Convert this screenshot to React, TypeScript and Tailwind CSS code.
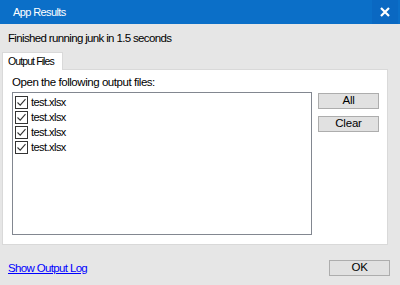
import React from "react";

const files = ["test.xlsx", "test.xlsx", "test.xlsx", "test.xlsx"];

function Check() {
  return (
    <span className="flex h-[13px] w-[13px] shrink-0 items-center justify-center border border-[#333] bg-white">
      <svg width="11" height="11" viewBox="0 0 11 11">
        <path d="M1.5 5.5 L4.2 8.2 L9.5 2.2" fill="none" stroke="#333" strokeWidth="1.1" />
      </svg>
    </span>
  );
}

function WinButton({ label, className = "" }: { label: string; className?: string }) {
  return (
    <button
      className={`flex h-[16px] w-[61px] items-center justify-center border border-[#adadad] bg-[#e1e1e1] text-[11.5px] leading-none tracking-[-0.2px] text-black ${className}`}
    >
      {label}
    </button>
  );
}

export default function App() {
  return (
    <div
      className="flex h-[285px] w-[400px] flex-col bg-[#e6e6e6] text-[11px] tracking-[-0.3px] text-black"
      style={{ fontFamily: '"Liberation Sans", Arial, sans-serif' }}
    >
      {/* title bar */}
      <div className="flex h-[24px] shrink-0 items-center bg-[#0b6fc8] pr-[2px] text-white">
        <span className="pl-[13px] text-[11px] tracking-[-0.6px]">App Results</span>
        <span className="ml-auto flex h-full w-[26px] items-center justify-center bg-[#0a68c2]">
          <svg width="10" height="10" viewBox="0 0 10 10">
            <path d="M1 1 L9 9 M9 1 L1 9" stroke="white" strokeWidth="2.2" />
          </svg>
        </span>
      </div>

      <div className="flex flex-1 flex-col px-[2px] pr-[12px]">
        <div className="mt-[6px] pl-[6px] text-[11.5px] leading-[16px] tracking-[-0.65px]">
          Finished running junk in 1.5 seconds
        </div>

        {/* tab strip */}
        <div className="mt-[6px] flex">
          <div className="relative z-10 -mb-px h-[18px] w-[61px] whitespace-nowrap border border-b-0 border-[#d9d9d9] bg-white pl-[5px] text-[10.5px] leading-[17px] tracking-[-0.9px]">
            Output Files
          </div>
        </div>

        {/* tab panel */}
        <div className="flex h-[176px] flex-col border border-[#d9d9d9] bg-white pl-[9px] pt-[4px] pb-[9px]">
          <div className="text-[11.5px] leading-[16px] tracking-[-0.45px]">Open the following output files:</div>
          <div className="mt-[2px] flex flex-1 gap-[6px]">
            <div className="flex w-[300px] flex-col border border-[#828790] pt-[2px] pl-px">
              {files.map((f, i) => (
                <div key={i} className="flex h-[15px] items-center gap-[3px] pl-px">
                  <Check />
                  <span className="text-[11px] leading-[15px] tracking-[-0.55px]">{f}</span>
                </div>
              ))}
            </div>
            <div className="flex flex-col gap-[7px] pt-px">
              <WinButton label="All" />
              <WinButton label="Clear" />
            </div>
          </div>
        </div>

        {/* footer */}
        <div className="mt-[15px] flex items-center">
          <a className="pl-[6px] text-[11.5px] leading-[16px] tracking-[-0.65px] text-[#0000ff] underline">
            Show Output Log
          </a>
          <WinButton label="OK" className="ml-auto -mr-[2px] h-[15px]" />
        </div>
      </div>
    </div>
  );
}
